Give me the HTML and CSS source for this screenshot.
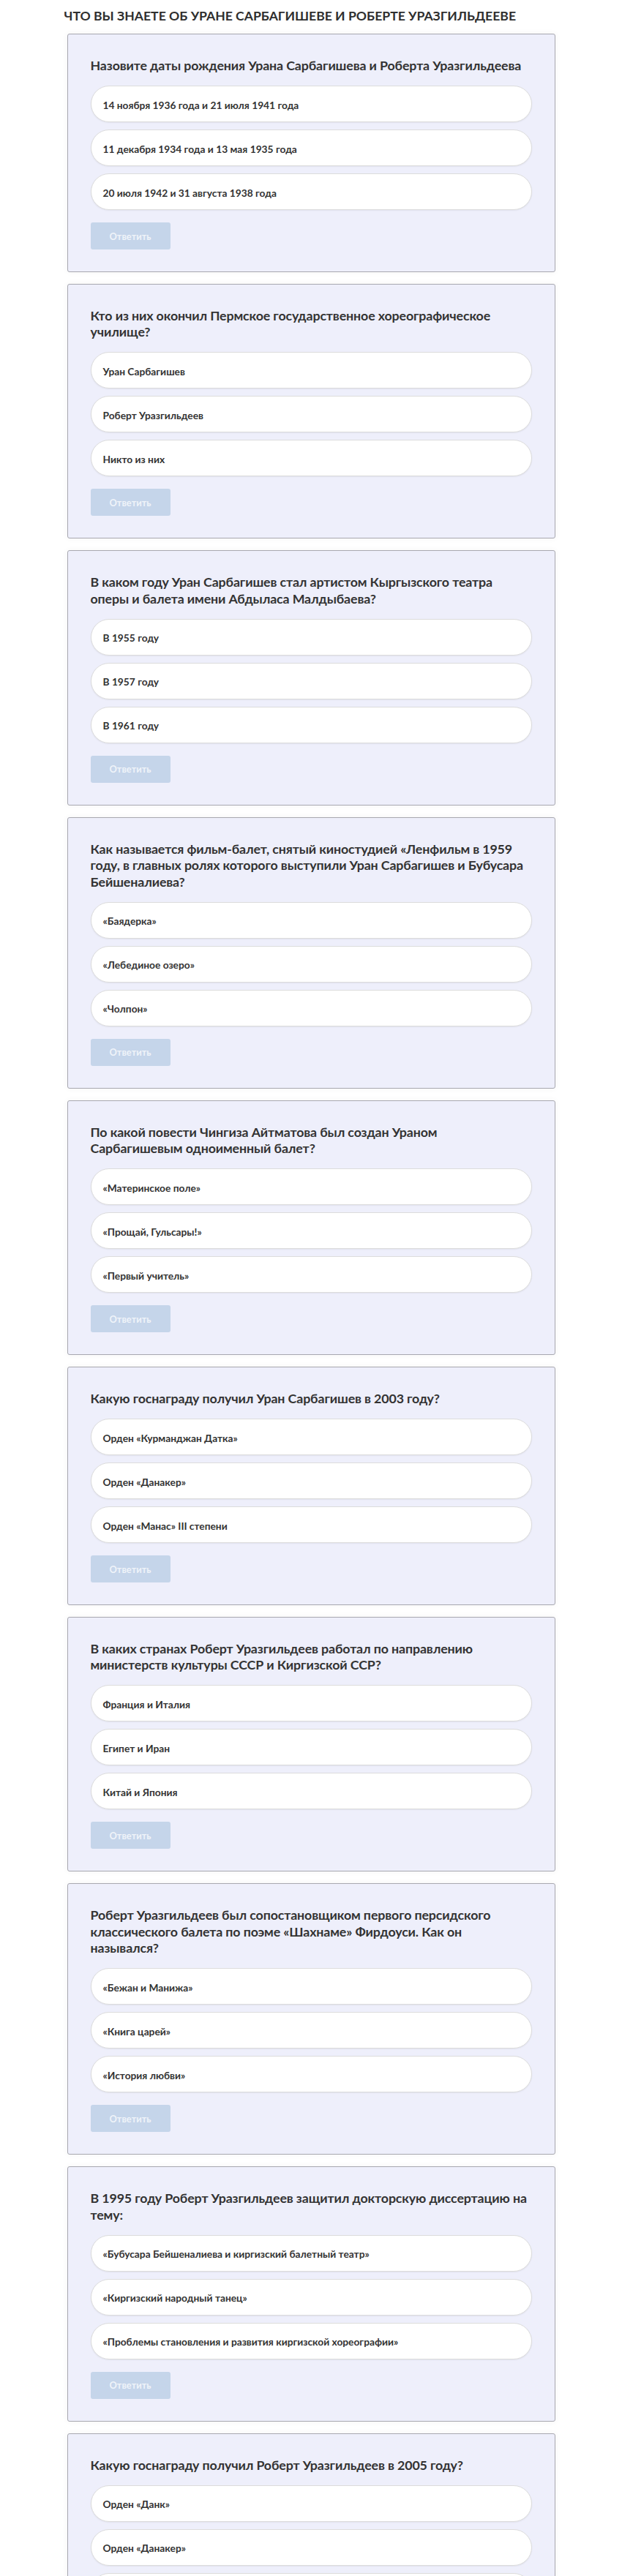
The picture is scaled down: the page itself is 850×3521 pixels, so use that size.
FILE: index.html
```html
<!DOCTYPE html>
<html lang="ru">
<head>
<meta charset="utf-8">
<title>Что вы знаете об Уране Сарбагишеве и Роберте Уразгильдееве</title>
<link rel="stylesheet" href="styles.css">
</head>
<body>
<div class="page">
  <h1 class="title">ЧТО ВЫ ЗНАЕТЕ ОБ УРАНЕ САРБАГИШЕВЕ И РОБЕРТЕ УРАЗГИЛЬДЕЕВЕ</h1>

  <div class="card">
    <div class="question">Назовите даты рождения Урана Сарбагишева и Роберта Уразгильдеева</div>
    <div class="options">
      <div class="option">14 ноября 1936 года и 21 июля 1941 года</div>
      <div class="option">11 декабря 1934 года и 13 мая 1935 года</div>
      <div class="option">20 июля 1942 и 31 августа 1938 года</div>
    </div>
    <button class="answer" disabled>Ответить</button>
  </div>

  <div class="card">
    <div class="question">Кто из них окончил Пермское государственное хореографическое училище?</div>
    <div class="options">
      <div class="option">Уран Сарбагишев</div>
      <div class="option">Роберт Уразгильдеев</div>
      <div class="option">Никто из них</div>
    </div>
    <button class="answer" disabled>Ответить</button>
  </div>

  <div class="card">
    <div class="question">В каком году Уран Сарбагишев стал артистом Кыргызского театра оперы и балета имени Абдыласа Малдыбаева?</div>
    <div class="options">
      <div class="option">В 1955 году</div>
      <div class="option">В 1957 году</div>
      <div class="option">В 1961 году</div>
    </div>
    <button class="answer" disabled>Ответить</button>
  </div>

  <div class="card">
    <div class="question">Как называется фильм-балет, снятый киностудией «Ленфильм в 1959 году, в главных ролях которого выступили Уран Сарбагишев и Бубусара Бейшеналиева?</div>
    <div class="options">
      <div class="option">«Баядерка»</div>
      <div class="option">«Лебединое озеро»</div>
      <div class="option">«Чолпон»</div>
    </div>
    <button class="answer" disabled>Ответить</button>
  </div>

  <div class="card">
    <div class="question">По какой повести Чингиза Айтматова был создан Ураном Сарбагишевым одноименный балет?</div>
    <div class="options">
      <div class="option">«Материнское поле»</div>
      <div class="option">«Прощай, Гульсары!»</div>
      <div class="option">«Первый учитель»</div>
    </div>
    <button class="answer" disabled>Ответить</button>
  </div>

  <div class="card">
    <div class="question">Какую госнаграду получил Уран Сарбагишев в 2003 году?</div>
    <div class="options">
      <div class="option">Орден «Курманджан Датка»</div>
      <div class="option">Орден «Данакер»</div>
      <div class="option">Орден «Манас» III степени</div>
    </div>
    <button class="answer" disabled>Ответить</button>
  </div>

  <div class="card">
    <div class="question">В каких странах Роберт Уразгильдеев работал по направлению министерств культуры СССР и Киргизской ССР?</div>
    <div class="options">
      <div class="option">Франция и Италия</div>
      <div class="option">Египет и Иран</div>
      <div class="option">Китай и Япония</div>
    </div>
    <button class="answer" disabled>Ответить</button>
  </div>

  <div class="card">
    <div class="question">Роберт Уразгильдеев был сопостановщиком первого персидского классического балета по поэме «Шахнаме» Фирдоуси. Как он назывался?</div>
    <div class="options">
      <div class="option">«Бежан и Манижа»</div>
      <div class="option">«Книга царей»</div>
      <div class="option">«История любви»</div>
    </div>
    <button class="answer" disabled>Ответить</button>
  </div>

  <div class="card">
    <div class="question">В 1995 году Роберт Уразгильдеев защитил докторскую диссертацию на тему:</div>
    <div class="options">
      <div class="option">«Бубусара Бейшеналиева и киргизский балетный театр»</div>
      <div class="option">«Киргизский народный танец»</div>
      <div class="option">«Проблемы становления и развития киргизской хореографии»</div>
    </div>
    <button class="answer" disabled>Ответить</button>
  </div>

  <div class="card">
    <div class="question">Какую госнаграду получил Роберт Уразгильдеев в 2005 году?</div>
    <div class="options">
      <div class="option">Орден «Данк»</div>
      <div class="option">Орден «Данакер»</div>
      <div class="option">Орден «Манас» III степени</div>
    </div>
    <button class="answer" disabled>Ответить</button>
  </div>
</div>
</body>
</html>
```

FILE: styles.css
```css
* { box-sizing: border-box; }

body {
  margin: 0;
  background: #ffffff;
  font-family: Lato, "Open Sans", "Noto Sans", sans-serif;
  color: #333333;
}

.page {
  width: 675px;
  margin: 0 auto;
  padding-top: 10px;
}

.title {
  margin: 0 0 12px 0;
  font-size: 17.6px;
  line-height: 24px;
  font-weight: 700;
  color: #2f2f2f;
}

.card {
  margin: 0 4px 16px 4px;
  background: #eeeffb;
  border: 1px solid #a8a8b0;
  border-radius: 3px;
  box-shadow: 0 0 8px rgba(0, 0, 0, 0.05);
  padding: 31px 31px 30px 31px;
}

.question {
  font-size: 17.8px;
  line-height: 22.4px;
  font-weight: 700;
  letter-spacing: -0.12px;
  color: #333333;
  margin-bottom: 16.6px;
}

.options {
  display: flex;
  flex-direction: column;
  gap: 10px;
}

.option {
  height: 50px;
  display: flex;
  align-items: center;
  padding: 2px 0 0 16px;
  background: #ffffff;
  border: 1px solid #dcdcdc;
  border-radius: 25px;
  box-shadow: 0 1px 2px rgba(0, 0, 0, 0.06);
  font-size: 13.75px;
  font-weight: 700;
  color: #333333;
}

.answer {
  display: block;
  margin-top: 17px;
  width: 109px;
  height: 37px;
  padding: 0;
  border: none;
  border-radius: 3px;
  background: #c5d5ea;
  color: rgba(255, 255, 255, 0.75);
  font-family: inherit;
  font-size: 12.8px;
  font-weight: 700;
}
```
